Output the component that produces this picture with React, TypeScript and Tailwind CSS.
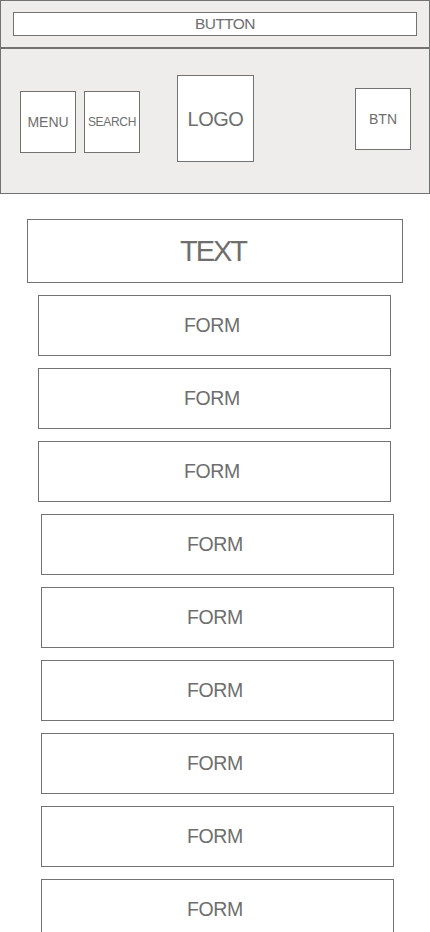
const box = 'border border-[#727272] bg-white text-[#6e6e6e] flex items-center justify-center';

const forms = [
  { id: 1, shift: false },
  { id: 2, shift: false },
  { id: 3, shift: false },
  { id: 4, shift: true },
  { id: 5, shift: true },
  { id: 6, shift: true },
  { id: 7, shift: true },
  { id: 8, shift: true },
  { id: 9, shift: true },
];

export default function App() {
  return (
    <div className="w-[430px] h-[932px] overflow-hidden bg-white font-['Liberation_Sans',Arial,sans-serif]">
      {/* top bar */}
      <div className="h-[48px] border border-[#727272] bg-[#eeedeb] pl-[12px] pt-[11px]">
        <div className={`${box} w-[404px] h-[24px] text-[15.5px] tracking-[-0.6px] pl-[20px]`}>BUTTON</div>
      </div>

      {/* nav */}
      <div className="h-[146px] border border-[#727272] bg-[#eeedeb] flex items-start pl-[19px] pr-[18px]">
        <div className={`${box} mt-[42px] w-[56px] h-[62px] text-[14px]`}>MENU</div>
        <div className={`${box} ml-[8px] mt-[42px] w-[56px] h-[62px] text-[12px] tracking-[-0.3px]`}>SEARCH</div>
        <div className={`${box} ml-[37px] mt-[26px] w-[77px] h-[87px] text-[20px] tracking-[-0.5px]`}>LOGO</div>
        <div className={`${box} ml-auto mt-[39px] w-[56px] h-[62px] text-[14px]`}>BTN</div>
      </div>

      {/* content */}
      <div className="flex flex-col pt-[25px]">
        <div className={`${box} mx-auto w-[376px] h-[64px] text-[29px] tracking-[-2px] pt-[2px] pr-[4px]`}>TEXT</div>
        <div className="flex flex-col gap-[12px] mt-[12px]">
          {forms.map((f) => (
            <div
              key={f.id}
              className={`${box} ${f.shift ? 'ml-[41px]' : 'ml-[38px]'} w-[353px] h-[61px] text-[19.5px] tracking-[-0.4px] pr-[5px] pt-[1px] shrink-0`}
            >
              FORM
            </div>
          ))}
        </div>
      </div>
    </div>
  );
}
